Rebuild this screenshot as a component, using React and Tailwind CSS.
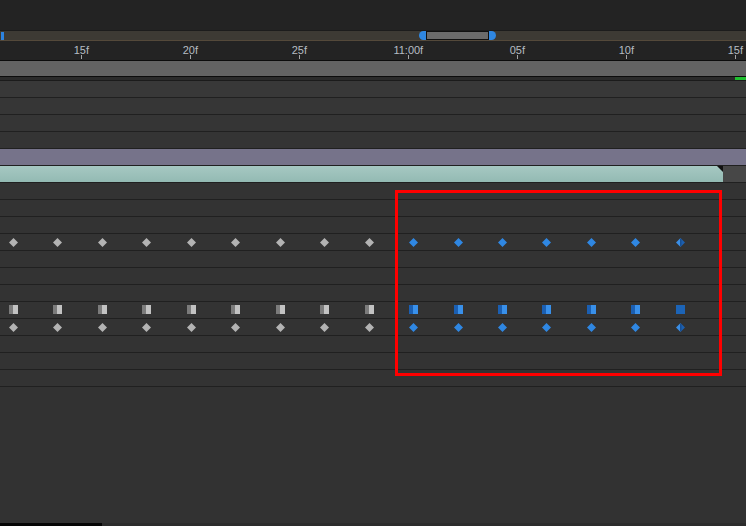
import React from "react";

const KX = Array.from({ length: 16 }, (_, i) => 13.3 + i * 44.47);
const TICKS = [
  { x: 81.3, t: "15f" },
  { x: 190.3, t: "20f" },
  { x: 299.3, t: "25f" },
  { x: 408.3, t: "11:00f" },
  { x: 517.3, t: "05f" },
  { x: 626.3, t: "10f" },
  { x: 735.3, t: "15f" },
];

function Diamond({ x, blue, half }) {
  const c = blue ? "#2f87e2" : "#b3b3b3";
  return (
    <svg
      width="9"
      height="9"
      viewBox="0 0 9 9"
      className="absolute top-[3.5px]"
      style={{ left: x - 4.5 }}
    >
      {half ? (
        <>
          <polygon points="4.5,0 4.5,9 0,4.5" fill="#3a8ee6" />
          <polygon points="4.5,0 9,4.5 4.5,9" fill="#1d5fae" />
          <rect x="4" y="1" width="1.5" height="7" fill="#164f93" />
        </>
      ) : (
        <polygon points="4.5,0 9,4.5 4.5,9 0,4.5" fill={c} />
      )}
    </svg>
  );
}

function Square({ x, blue, solid }) {
  if (solid) {
    return (
      <div
        className="absolute top-[3px] h-[9px] w-[9px] bg-[#1c64b7]"
        style={{ left: x - 4.5 }}
      />
    );
  }
  return (
    <div className="absolute top-[3px] flex h-[9px] w-[9px]" style={{ left: x - 4.5 }}>
      <div className={blue ? "h-full w-[4px] bg-[#1b5fb2]" : "h-full w-[4px] bg-[#7b7b7b]"} />
      <div className={blue ? "h-full w-[5px] bg-[#3990ea]" : "h-full w-[5px] bg-[#c2c2c2]"} />
    </div>
  );
}

function Row({ children, className = "bg-[#333333]" }) {
  return (
    <div className="h-[17px] border-b border-[#202020]">
      <div className={"relative h-[16px] " + className}>{children}</div>
    </div>
  );
}

function DiamondRow() {
  return (
    <Row>
      {KX.map((x, i) => (
        <Diamond key={i} x={x} blue={i >= 9} half={i === 15} />
      ))}
    </Row>
  );
}

function SquareRow() {
  return (
    <Row>
      {KX.map((x, i) => (
        <Square key={i} x={x} blue={i >= 9} solid={i === 15} />
      ))}
    </Row>
  );
}

export default function App() {
  return (
    <div
      className="relative flex h-[526px] w-[746px] flex-col overflow-hidden bg-[#232323]"
      style={{ fontFamily: '"Liberation Sans", Arial, sans-serif' }}
    >
      <div className="h-[30px] shrink-0 bg-[#232323]" />
      {/* navigator */}
      <div className="relative h-[11px] shrink-0 border-t border-b border-t-[#1c1c1c] border-b-[#54493a] bg-[#3d3a34]">
        <div className="absolute left-[1px] top-[1px] h-[8px] w-[3px] bg-[#2c83e0]" />
        <div className="absolute left-[419px] top-[0px] flex h-[9px] items-stretch">
          <div className="w-[7px] rounded-l-full bg-[#2f87e2]" />
          <div className="w-[63px] border border-[#111111] bg-[#6b6b6b]" />
          <div className="w-[7px] rounded-r-full bg-[#2f87e2]" />
        </div>
      </div>
      {/* ruler */}
      <div className="relative h-[19px] shrink-0 bg-[#232323]">
        {TICKS.map((t) => (
          <div key={t.x}>
            <div
              className="absolute top-[2px] w-[60px] text-center text-[11px] leading-[14px] text-[#b6bcc2]"
              style={{ left: t.x - 30 }}
            >
              {t.t}
            </div>
            <div className="absolute top-[14px] h-[4px] w-px bg-[#a5a5a5]" style={{ left: t.x - 0.5 }} />
          </div>
        ))}
      </div>
      <div className="h-px shrink-0 bg-[#0c0c0c]" />
      <div className="h-[15px] shrink-0 bg-[#636363]" />
      <div className="h-px shrink-0 bg-[#0c0c0c]" />
      <div className="flex h-[3px] shrink-0 justify-end bg-[#2b2b2b]">
        <div className="h-full w-[11px] bg-[#1fbf30]" />
      </div>
      <div className="h-px shrink-0 bg-[#1b1b1b]" />
      {/* rows */}
      <Row className="bg-[#383838]" />
      <Row className="bg-[#363636]" />
      <Row className="bg-[#353535]" />
      <Row className="bg-[#343434]" />
      <Row className="bg-[#76738a]" />
      <Row className="flex bg-[#474747]">
        <div className="relative h-full w-[723px] bg-gradient-to-b from-[#a6c8c2] to-[#93bab3]">
          <svg width="6" height="6" viewBox="0 0 6 6" className="absolute right-0 top-0">
            <polygon points="0,0 6,0 6,6" fill="#111111" />
          </svg>
        </div>
      </Row>
      <Row />
      <Row />
      <Row />
      <DiamondRow />
      <Row />
      <Row />
      <Row />
      <SquareRow />
      <DiamondRow />
      <Row />
      <Row />
      <Row />
      <div className="flex-1 bg-[#323232]" />
      <div className="flex h-[3px] shrink-0 bg-[#2c2c2c]">
        <div className="h-full w-[102px] bg-[#050505]" />
      </div>
      {/* highlight overlay */}
      <div className="pointer-events-none absolute left-[395px] top-[190px] h-[186px] w-[327px] border-[3px] border-[#ff0000]" />
    </div>
  );
}
